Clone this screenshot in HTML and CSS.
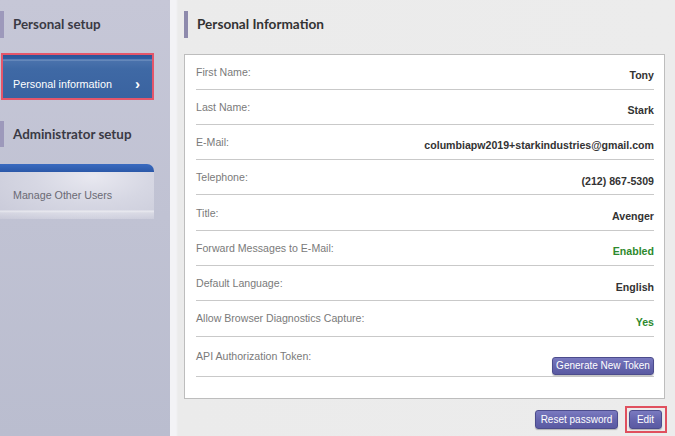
FILE: index.html
```html
<!DOCTYPE html>
<html>
<head>
<meta charset="utf-8">
<link rel="stylesheet" href="styles.css">
</head>
<body>
<div class="page">
  <aside class="sidebar">
    <div class="side-head">Personal setup</div>
    <div class="side-active">
      <div class="side-item-active"><span>Personal information</span><span class="chev">›</span></div>
    </div>
    <div class="side-head admin">Administrator setup</div>
    <div class="side-item">
      <div class="side-item-band"></div>
      <div class="side-item-body">Manage Other Users</div>
    </div>
  </aside>
  <main class="main">
    <div class="main-head">Personal Information</div>
    <div class="card">
      <div class="row"><span class="lbl">First Name:</span><span class="val">Tony</span></div>
      <div class="row"><span class="lbl">Last Name:</span><span class="val">Stark</span></div>
      <div class="row"><span class="lbl">E-Mail:</span><span class="val">columbiapw2019+starkindustries@gmail.com</span></div>
      <div class="row"><span class="lbl">Telephone:</span><span class="val">(212) 867-5309</span></div>
      <div class="row"><span class="lbl">Title:</span><span class="val">Avenger</span></div>
      <div class="row"><span class="lbl">Forward Messages to E-Mail:</span><span class="val green">Enabled</span></div>
      <div class="row"><span class="lbl">Default Language:</span><span class="val">English</span></div>
      <div class="row"><span class="lbl">Allow Browser Diagnostics Capture:</span><span class="val green">Yes</span></div>
      <div class="row api"><span class="lbl">API Authorization Token:</span><button class="btn gen">Generate New Token</button></div>
    </div>
    <div class="actions">
      <button class="btn reset">Reset password</button>
      <div class="hl"><button class="btn edit">Edit</button></div>
    </div>
  </main>
</div>
</body>
</html>
```
FILE: styles.css
```css
html, body {
  margin: 0;
  padding: 0;
  height: 100%;
}
body {
  font-family: "Liberation Sans", Arial, sans-serif;
  background: #ececec;
}
.page {
  display: flex;
  height: 436px;
  overflow: hidden;
}
.sidebar {
  width: 170px;
  flex: none;
  background: linear-gradient(180deg, #c6c7d7 0%, #c0c2d3 50%, #babdcf 100%);
  padding-top: 11px;
  box-sizing: border-box;
}
.side-head {
  height: 27px;
  border-left: 4px solid #9d99bb;
  padding-left: 9px;
  font-family: Lato, "Open Sans", sans-serif;
  font-weight: 700;
  font-size: 13.4px;
  color: #3a3a44;
  line-height: 26px;
}
.side-head.admin {
  margin-top: 21px;
  height: 26px;
}
.side-active {
  margin: 15px 0 0 1px;
  width: 153px;
  height: 47px;
  box-sizing: border-box;
  border: 2px solid #e4566a;
}
.side-item-active {
  height: 100%;
  box-sizing: border-box;
  background:
    linear-gradient(180deg, #2b5598 0px, #2f5da3 4px, #7f9dc8 5px, #4a72ac 6px, #3f69a5 14px, #3a63a0 100%);
  color: #fff;
  font-size: 10.8px;
  display: flex;
  align-items: center;
  justify-content: space-between;
  padding: 15px 12px 0 10px;
}
.chev {
  font-size: 15px;
  font-weight: bold;
  line-height: 1;
  margin-top: -2px;
}
.side-item {
  margin-top: 17px;
  width: 154px;
  height: 55px;
  display: flex;
  flex-direction: column;
}
.side-item-band {
  height: 8px;
  background: linear-gradient(180deg, #3a6bc0, #2b58a8);
  border-top-right-radius: 7px;
}
.side-item-body {
  flex: 1;
  background:
    linear-gradient(180deg, rgba(255,255,255,0) 0, rgba(255,255,255,0) 38px, rgba(255,255,255,0.55) 39px, rgba(255,255,255,0.2) 41px, rgba(255,255,255,0) 47px),
    radial-gradient(ellipse at 60% 10%, #e8e8f0 0%, #d6d7e3 45%, #c8c9d8 100%);
  color: #6a6a74;
  font-size: 10.7px;
  padding: 17px 0 0 13px;
  box-sizing: border-box;
}
.main {
  flex: 1;
  background: linear-gradient(90deg, #f3f3f6 0, #f3f3f6 6px, #ebebeb 8px, #ececec 100%);
  padding: 11px 0 0 14px;
  box-sizing: border-box;
}
.main-head {
  height: 27px;
  border-left: 4px solid #8e8aac;
  padding-left: 9px;
  font-family: Lato, "Open Sans", sans-serif;
  font-size: 13.6px;
  font-weight: 700;
  color: #333;
  line-height: 26px;
}
.card {
  margin-top: 16px;
  width: 481px;
  box-sizing: border-box;
  background: #fff;
  border: 1px solid #bdbdbd;
  padding: 0 10px 21px 11px;
}
.row {
  height: 35.3px;
  box-sizing: border-box;
  border-bottom: 1px solid #c9c9c9;
  display: flex;
  align-items: center;
  justify-content: space-between;
}
.row:first-child {
  height: 34.5px;
}
.lbl {
  color: #7a7a7a;
  font-size: 10.6px;
  margin-top: 0;
}
.val {
  color: #333;
  font-weight: bold;
  font-size: 10.6px;
  margin-top: 7px;
}
.val.green {
  color: #2e8a2e;
}
.row.api {
  height: 40px;
  align-items: flex-start;
}
.row.api .lbl {
  margin-top: 13px;
}
.btn {
  font-family: "Liberation Sans", Arial, sans-serif;
  font-size: 10px;
  color: #fff;
  border: 1px solid #4c4c8c;
  border-radius: 3px;
  background: linear-gradient(180deg, #7a7ac0 0%, #6666ae 50%, #5a5aa2 100%);
  box-shadow: 0 1px 1px rgba(0,0,0,0.25);
  padding: 0;
  cursor: pointer;
}
.gen {
  width: 102px;
  height: 18px;
  margin-top: 20px;
}
.actions {
  width: 483px;
  display: flex;
  justify-content: flex-end;
  align-items: center;
  margin-top: 7px;
  gap: 7px;
}
.reset {
  width: 83px;
  height: 19px;
}
.hl {
  border: 2px solid #e0505e;
  padding: 2px 3px 2px 2px;
  display: flex;
}
.edit {
  width: 33px;
  height: 19px;
}
```
